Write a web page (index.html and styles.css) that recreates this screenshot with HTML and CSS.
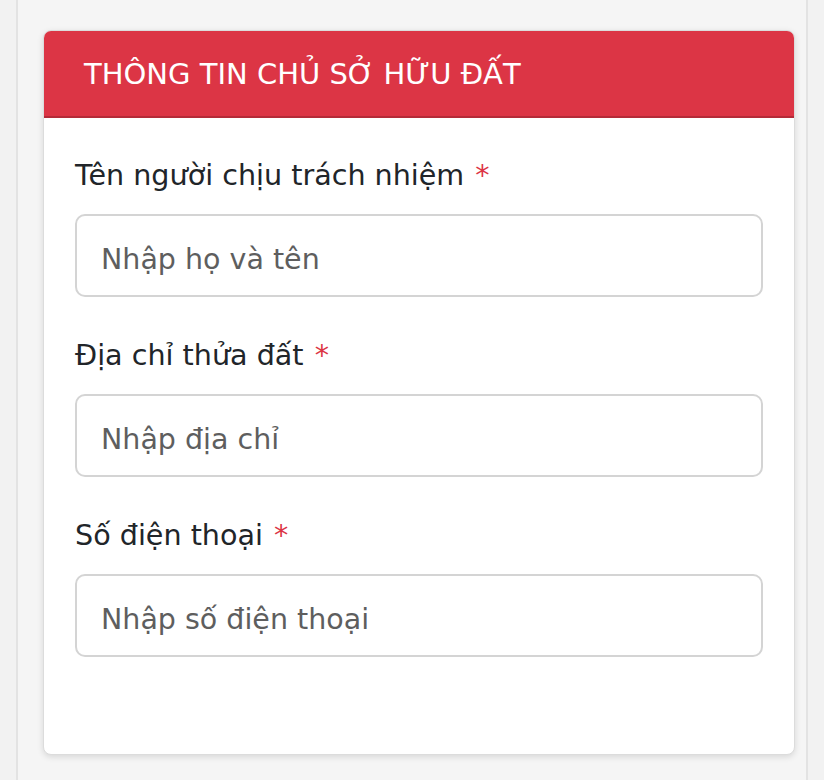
FILE: index.html
```html
<!DOCTYPE html>
<html lang="vi">
<head>
<meta charset="utf-8">
<title>Thông tin chủ sở hữu đất</title>
<link rel="stylesheet" href="styles.css">
</head>
<body>
<div class="page">
  <section class="card">
    <div class="card-header">THÔNG TIN CHỦ SỞ HỮU ĐẤT</div>
    <form class="card-body">
      <div class="group">
        <label class="label" for="name">Tên người chịu trách nhiệm <span class="req">*</span></label>
        <input class="input" id="name" type="text" placeholder="Nhập họ và tên">
      </div>
      <div class="group">
        <label class="label" for="addr">Địa chỉ thửa đất <span class="req">*</span></label>
        <input class="input" id="addr" type="text" placeholder="Nhập địa chỉ">
      </div>
      <div class="group">
        <label class="label" for="phone">Số điện thoại <span class="req">*</span></label>
        <input class="input" id="phone" type="text" placeholder="Nhập số điện thoại">
      </div>
    </form>
  </section>
</div>
</body>
</html>
```
FILE: styles.css
```css
* { box-sizing: border-box; }
html, body { margin: 0; }
body {
  background: #f2f2f2;
  font-family: "DejaVu Sans", "Noto Sans", sans-serif;
}
.page {
  margin: 0 16px;
  min-height: 780px;
  background: #f5f5f5;
  border-left: 2px solid #e3e3e3;
  border-right: 2px solid #e3e3e3;
  padding: 30px 11px 0 25px;
}
.card {
  height: 725px;
  background: #fff;
  border: 1px solid #dcdcdc;
  border-radius: 8px;
  overflow: hidden;
  box-shadow: 0 2px 6px rgba(0, 0, 0, 0.12);
}
.card-header {
  height: 87px;
  background: #dc3545;
  border-bottom: 2px solid #b42b38;
  color: #fff;
  font-size: 29px;
  display: flex;
  align-items: center;
  padding-left: 40px;
}
.card-body {
  padding: 37px 31px 0 31px;
  margin: 0;
}
.group {
  margin-bottom: 38px;
}
.label {
  display: block;
  font-size: 28.6px;
  line-height: 40px;
  color: #212529;
  margin-bottom: 19px;
}
.req { color: #dc3545; margin-left: 2px; }
.input {
  display: block;
  width: 100%;
  height: 83px;
  border: 2px solid #d4d4d4;
  border-radius: 10px;
  padding: 8px 24px 0;
  font-family: inherit;
  font-size: 28.5px;
  color: #333;
  background: #fff;
  outline: none;
}
.input::placeholder { color: #5e5e5e; opacity: 1; }
```
